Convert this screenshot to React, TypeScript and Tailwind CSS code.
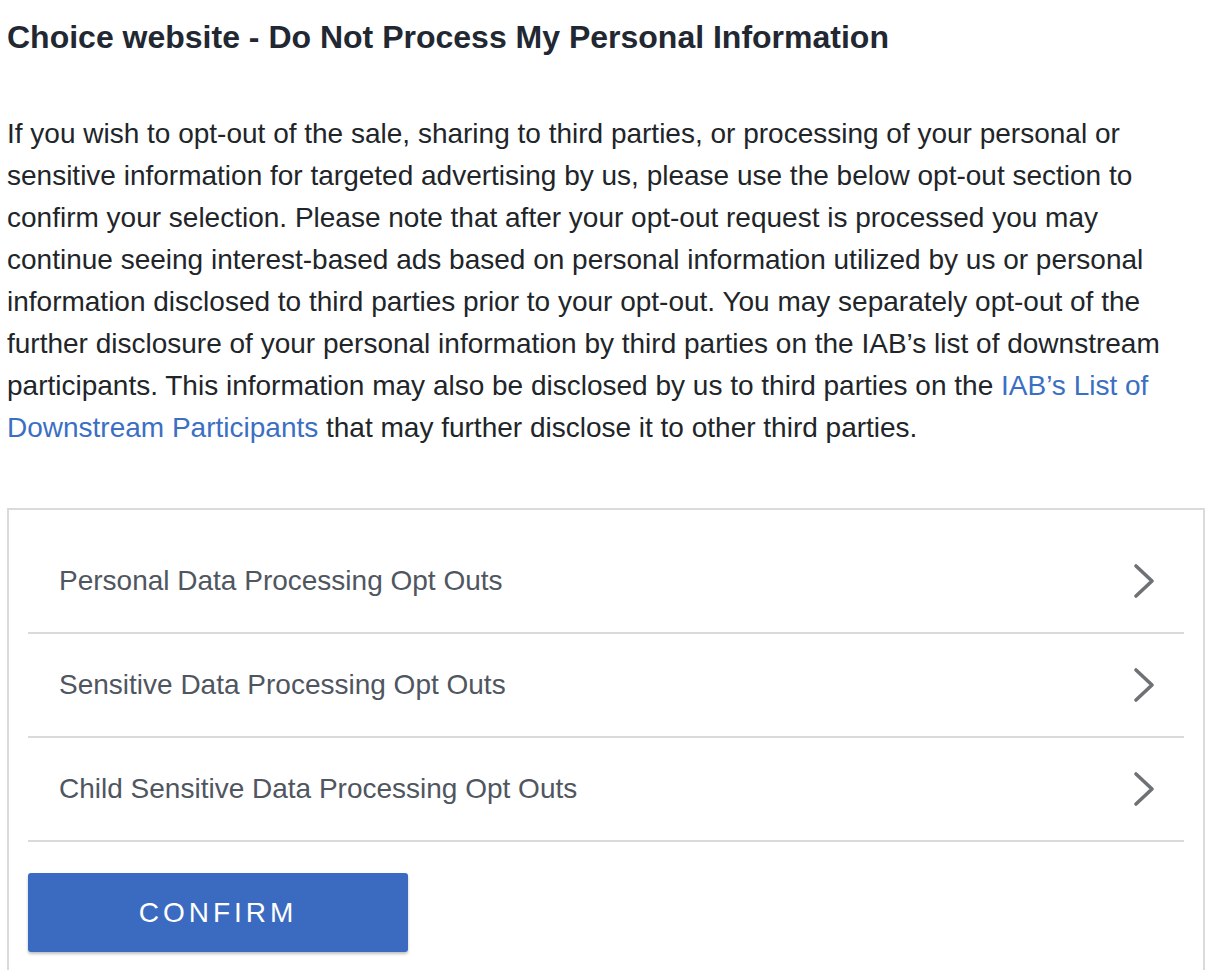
import React from "react";

const rows = [
  "Personal Data Processing Opt Outs",
  "Sensitive Data Processing Opt Outs",
  "Child Sensitive Data Processing Opt Outs",
];

function Chevron() {
  return (
    <svg width="26" height="38" viewBox="0 0 26 38" fill="none" className="shrink-0">
      <polyline
        points="5,4 21,19 5,34"
        stroke="#6f7275"
        strokeWidth="3.6"
        strokeLinecap="round"
        strokeLinejoin="round"
      />
    </svg>
  );
}

export default function App() {
  return (
    <div
      className="min-h-[970px] bg-white px-[7px] text-[#212529]"
      style={{ fontFamily: '"Liberation Sans", Arial, Helvetica, sans-serif' }}
    >
      <h1 className="pt-[18px] text-[32px] font-bold leading-[38px] text-[#222832] whitespace-nowrap">
        Choice website - Do Not Process My Personal Information
      </h1>
      <p className="mt-[57px] text-[28px] leading-[42px] text-[#212529] whitespace-nowrap">
        If you wish to opt-out of the sale, sharing to third parties, or processing of your personal or
        <br />
        sensitive information for targeted advertising by us, please use the below opt-out section to
        <br />
        confirm your selection. Please note that after your opt-out request is processed you may
        <br />
        continue seeing interest-based ads based on personal information utilized by us or personal
        <br />
        information disclosed to third parties prior to your opt-out. You may separately opt-out of the
        <br />
        further disclosure of your personal information by third parties on the IAB’s list of downstream
        <br />
        participants. This information may also be disclosed by us to third parties on the{" "}
        <a className="text-[#3b6fc4]">IAB’s List of</a>
        <br />
        <a className="text-[#3b6fc4]">Downstream Participants</a> that may further disclose it to other
        third parties.
      </p>
      <div className="mt-[59px] border-2 border-b-0 border-[#dadada] px-[19px] pt-[20px] pb-[20px]">
        {rows.map((r) => (
          <div
            key={r}
            className="flex h-[104px] items-center justify-between border-b-2 border-[#dadada] pl-[31px] pr-[27px]"
          >
            <span className="text-[28px] text-[#4f5660]">{r}</span>
            <Chevron />
          </div>
        ))}
        <button className="mt-[31px] h-[79px] w-[380px] rounded-[3px] bg-[#3a6bc0] text-[28px] tracking-[4px] text-white shadow-[0_2px_3px_rgba(0,0,0,0.25)]">
          CONFIRM
        </button>
      </div>
    </div>
  );
}
